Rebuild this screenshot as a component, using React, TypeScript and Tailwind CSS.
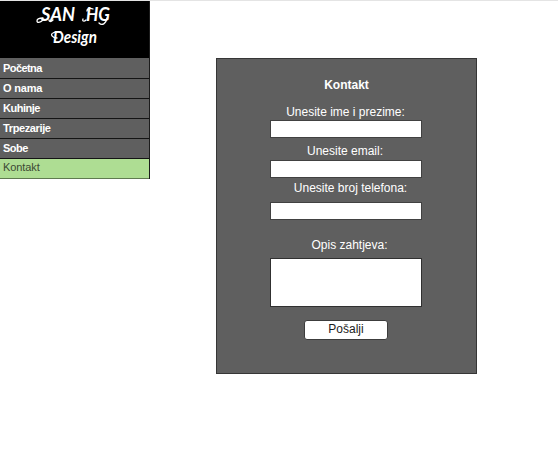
const links = [
  { name: 'Početna', tracking: 'tracking-[-0.57px]' },
  { name: 'O nama', tracking: 'tracking-[-0.2px]' },
  { name: 'Kuhinje', tracking: 'tracking-[-0.5px]' },
  { name: 'Trpezarije', tracking: 'tracking-[-0.38px]' },
  { name: 'Sobe', tracking: 'tracking-[-0.5px]' },
];

const field = 'block h-[18px] w-[152px] border border-[#414141] bg-white px-1 text-xs text-black outline-none';

function Logo() {
  return (
    <div className="h-[57px] bg-black">
      <svg
        className="block h-[57px] w-[149px] fill-white font-['Lato','Liberation_Sans',sans-serif] italic"
        viewBox="0 -1 149 57"
      >
        <text x="41" y="19" fontSize="18" fontWeight="700" textLength="34" lengthAdjust="spacingAndGlyphs">SAN</text>
        <text x="86" y="19" fontSize="18" fontWeight="700" textLength="24" lengthAdjust="spacingAndGlyphs">HG</text>
        <text x="53" y="41" fontSize="17" fontWeight="700" textLength="44" lengthAdjust="spacingAndGlyphs">Design</text>
        <g fill="none" stroke="white" strokeWidth="1.3" strokeLinecap="round">
          <path d="M43 18c-3 3-6 3-6 1s3-3 6-3" />
          <path d="M53 18c-2 2-4 2-4 0" />
          <path d="M86 18c-2 2-4 1-3-1M87 9c0-3 4-3 6-2" />
          <path d="M107 16c-1 6-5 8-8 5" />
          <path d="M57 36c-5 0-7-4-4-5 3-2 6-1 8-1" />
        </g>
      </svg>
    </div>
  );
}

export default function App() {
  return (
    <div className="flex h-[461px] w-[558px] items-start overflow-hidden border-t border-[#e4e4e4] bg-white font-['Liberation_Sans',Arial,sans-serif]">
      <nav className="w-[150px] shrink-0 border-r border-[#1c1c1c]">
        <Logo />
        {links.map(({ name, tracking }, i) => (
          <a
            key={name}
            className={`block border-b border-[#141414] bg-[#5f5f5f] pl-[3px] text-[11px] font-bold text-white ${tracking} ${i === 0 ? 'h-[21px] leading-[21px]' : 'h-5 leading-[19px]'}`}
          >
            {name}
          </a>
        ))}
        <a className="block h-5 border-b border-[#5f7a50] bg-[#aedd93] pl-[3px] text-[11px] leading-[17px] tracking-[-0.1px] text-[#3c4a34]">
          Kontakt
        </a>
      </nav>
      <form className="mt-[57px] ml-[66px] flex h-[316px] w-[261px] flex-col items-center border border-[#363636] bg-[#5f5f5f] text-xs leading-[14px] text-white">
        <h1 className="mt-[19px] font-bold">Kontakt</h1>
        <label className="mt-[13px] mr-[2px]">Unesite ime i prezime:</label>
        <input className={`${field} mt-[1px] mr-[2px]`} />
        <label className="mt-[6px] mr-[3px]">Unesite email:</label>
        <input className={`${field} mt-[2px] mr-[2px]`} />
        <label className="mt-[3px] ml-[8px]">Unesite broj telefona:</label>
        <input className={`${field} mt-[7px] mr-[2px]`} />
        <label className="mt-[18px] ml-[6px]">Opis zahtjeva:</label>
        <textarea className="mt-[6px] mr-px block h-[49px] w-[152px] shrink-0 resize-none border border-[#303030] bg-white outline-none" />
        <button type="button" className="mt-[13px] mr-[2px] h-5 w-[84px] rounded-[3px] border border-[#3c3c3c] bg-white pb-[2px] pl-px leading-4 text-[#1c1c1c]">
          Pošalji
        </button>
      </form>
    </div>
  );
}
